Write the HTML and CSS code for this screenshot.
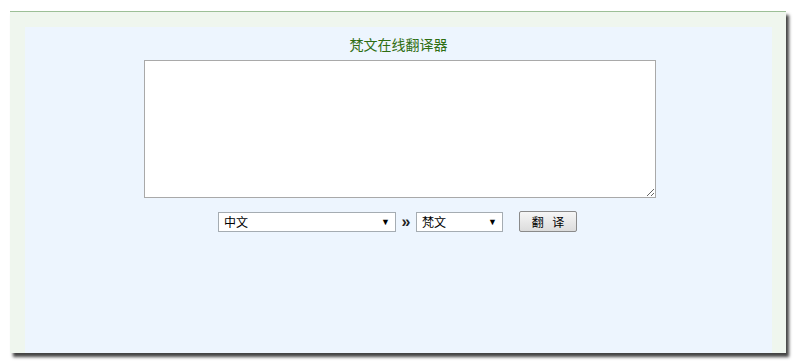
FILE: index.html
```html
<!DOCTYPE html>
<html>
<head>
<meta charset="utf-8">
<title>梵文在线翻译器</title>
<link rel="stylesheet" href="styles.css">
</head>
<body>
    <div class="box">
        <div class="inner">
            <h1 class="title">梵文在线翻译器</h1>
            <form class="tool">
                <textarea class="source"></textarea>
                <div class="controls">
                    <span class="pick wide">
                        <select>
                            <option>中文</option>
                        </select>
                    </span>
                    <span class="arrow">»</span>
                    <span class="pick narrow">
                        <select>
                            <option>梵文</option>
                        </select>
                    </span>
                    <button type="button" class="go">翻 译</button>
                </div>
            </form>
        </div>
    </div>
</body>
</html>
```

FILE: styles.css
```css
body {
    margin: 0;
    padding-bottom: 10px;
    background: #fff;
    font-family: "Liberation Sans", "Noto Sans CJK SC", sans-serif;
    font-size: 12px;
}

.box {
    margin: 11px 0 0 10px;
    width: 747px;
    height: 326px;
    padding: 15px 14px 0 15px;
    background: #eff6ee;
    border-top: 1px solid #9cbf97;
    box-shadow: 3px 4px 3px #444;
}

.inner {
    height: 326px;
    background: #edf5fe;
    padding-top: 4px;
    box-sizing: border-box;
}

.title {
    margin: 0;
    height: 29px;
    line-height: 29px;
    text-align: center;
    font-size: 14px;
    font-weight: normal;
    color: #2f6e12;
}

.tool {
    margin: 0;
    padding-left: 2px;
    text-align: center;
}

.source {
    display: block;
    margin: 0 auto;
    width: 512px;
    height: 138px;
    box-sizing: border-box;
    border: 1px solid #a9a9a9;
    background: #fff;
    resize: both;
}

.controls {
    display: flex;
    justify-content: center;
    align-items: center;
    margin-top: 13px;
    padding-right: 4px;
}

.pick {
    position: relative;
    display: inline-block;
}

.pick select {
    appearance: none;
    -webkit-appearance: none;
    height: 20px;
    box-sizing: border-box;
    border: 1px solid #a5acb2;
    border-radius: 0;
    background: #fff;
    padding: 0 0 0 5px;
    font-family: "Noto Sans CJK SC", sans-serif;
    font-size: 12px;
    color: #000;
}

.pick::after {
    content: "▼";
    position: absolute;
    right: 6px;
    top: 4px;
    font-size: 9px;
    line-height: 12px;
    color: #000;
    pointer-events: none;
}

.wide select {
    width: 178px;
}

.narrow select {
    width: 87px;
}

.arrow {
    width: 20px;
    text-align: center;
    font-size: 16px;
    font-weight: bold;
    line-height: 20px;
    color: #222;
}

.go {
    margin-left: 16px;
    width: 58px;
    height: 21px;
    padding: 0;
    border: 1px solid #8a8a8a;
    border-radius: 2px;
    background: linear-gradient(#f6f6f6, #dcdcdc);
    font-family: "Noto Sans CJK SC", sans-serif;
    font-size: 12px;
    letter-spacing: 3px;
    text-indent: 3px;
    color: #000;
}
```
